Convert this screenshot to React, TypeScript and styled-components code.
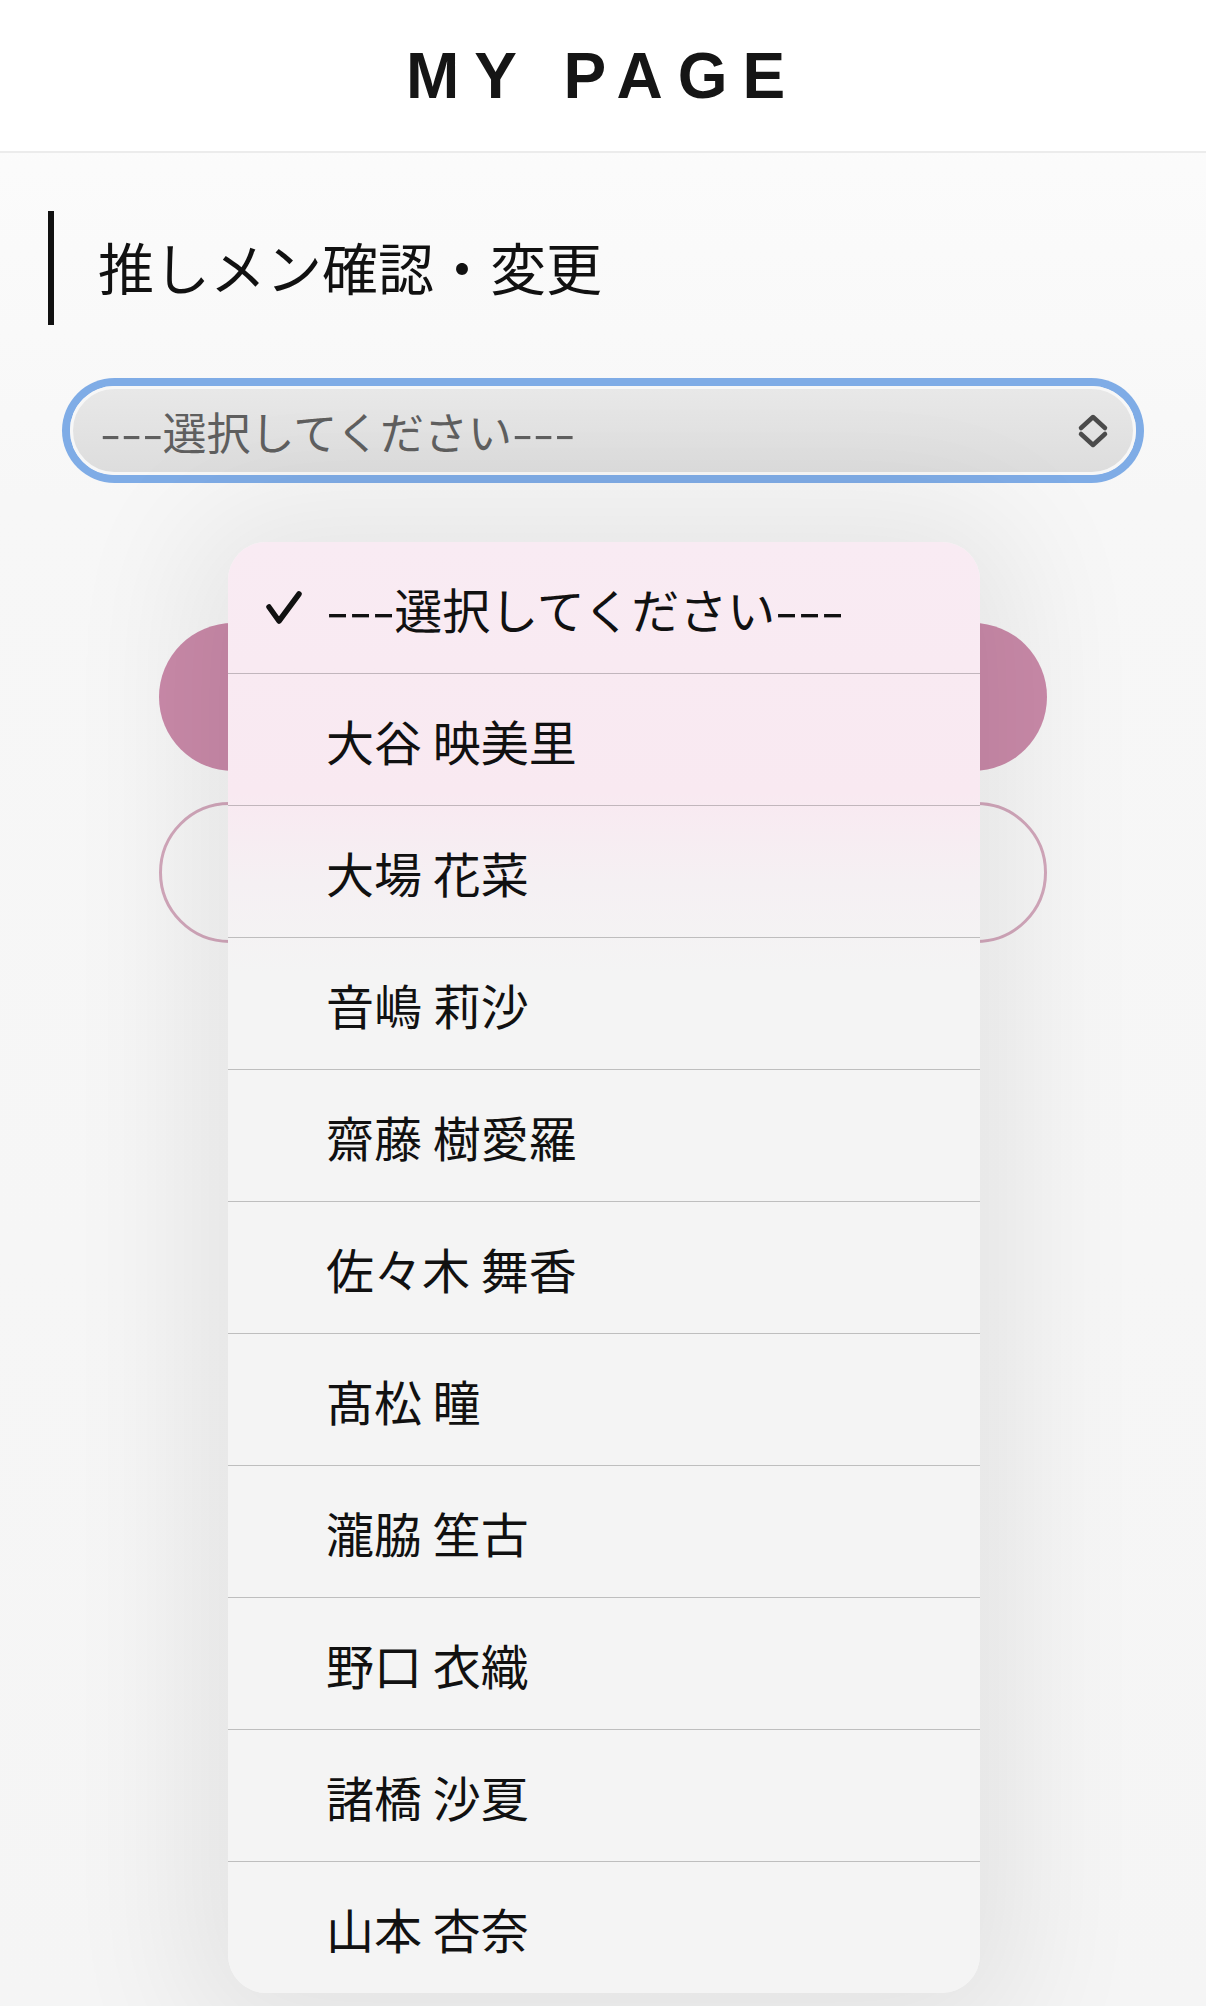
import styled, { createGlobalStyle } from "styled-components";

const members = [
  "大谷 映美里",
  "大場 花菜",
  "音嶋 莉沙",
  "齋藤 樹愛羅",
  "佐々木 舞香",
  "髙松 瞳",
  "瀧脇 笙古",
  "野口 衣織",
  "諸橋 沙夏",
  "山本 杏奈",
];

const GlobalStyle = createGlobalStyle`
  html, body {
    margin: 0;
    padding: 0;
    background: #f4f4f4;
  }
  body {
    font-family: "Noto Sans CJK JP", "Noto Sans", sans-serif;
    color: #111;
  }
`;

const Page = styled.div`
  position: relative;
  min-height: 2006px;
  background: linear-gradient(180deg, #fdfdfd 0px, #f7f7f7 500px, #f5f5f5 100%);
  overflow: hidden;
`;

const Header = styled.header`
  height: 151px;
  display: flex;
  align-items: center;
  justify-content: center;
  background: #fff;
  border-bottom: 2px solid #ececec;
`;

const Title = styled.h1`
  margin: 0;
  font-family: "Liberation Sans", Arial, sans-serif;
  font-weight: 700;
  font-size: 64px;
  letter-spacing: 15px;
  color: #151515;
`;

const Main = styled.main`
  padding: 58px 48px 0;
`;

const SectionHeading = styled.h2`
  margin: 0;
  height: 114px;
  display: flex;
  align-items: center;
  padding-left: 44px;
  padding-bottom: 6px;
  box-sizing: border-box;
  border-left: 6px solid #111;
  font-size: 56px;
  font-weight: 400;
  color: #111;
`;

const SelectBox = styled.div`
  margin: 61px 22px 0;
  height: 83px;
  display: flex;
  align-items: center;
  justify-content: space-between;
  padding: 0 24px 0 27px;
  border: 3px solid #f7f7f7;
  border-radius: 999px;
  background: linear-gradient(180deg, #e8e8e8 0%, #dddddd 100%);
  box-shadow: 0 0 0 8px #7face6;
`;

const SelectText = styled.span`
  font-size: 44px;
  color: #5f5f5f;
`;

// Hiragino's hyphens are longer than Noto's, so stretch them
const Dashes = styled.span`
  display: inline-block;
  transform: scaleX(1.38);
  transform-origin: left center;
  margin-right: 0.38em;
`;

const ButtonStack = styled.div`
  margin: 148px 111px 0;
  display: flex;
  flex-direction: column;
  gap: 31px;
`;

const PillButton = styled.button<{ $outline?: boolean }>`
  height: ${(p) => (p.$outline ? "141px" : "148px")};
  border-radius: 999px;
  border: ${(p) => (p.$outline ? "3px solid #d2a7bb" : "none")};
  background: ${(p) => (p.$outline ? "transparent" : "#ca8aa9")};
`;

const Popover = styled.div`
  position: absolute;
  top: 542px;
  left: 228px;
  width: 752px;
  border-radius: 38px;
  overflow: hidden;
  background: linear-gradient(
    180deg,
    #f9ebf3 0px,
    #f9e9f1 250px,
    #f5f0f3 340px,
    #f4f4f4 430px,
    #f4f4f4 100%
  );
  box-shadow: 0 10px 130px 40px rgba(0, 0, 0, 0.075);
`;

const Option = styled.div`
  height: 131px;
  display: flex;
  align-items: center;
  padding-left: 38px;
  font-size: 48px;
  color: #111;

  & + & {
    border-top: 1px solid rgba(0, 0, 0, 0.22);
  }
`;

const CheckSlot = styled.span`
  width: 60px;
  display: flex;
  align-items: center;
`;

const Placeholder = () => (
  <span>
    <Dashes>---</Dashes>選択してください<Dashes>---</Dashes>
  </span>
);

const Check = () => (
  <svg width="36" height="34" viewBox="0 0 36 34">
    <polyline
      points="3,16 13,30 33,3"
      fill="none"
      stroke="#111"
      strokeWidth="5.5"
      strokeLinecap="round"
      strokeLinejoin="round"
    />
  </svg>
);

const Chevrons = () => (
  <svg width="32" height="36" viewBox="0 0 32 36">
    <g fill="none" stroke="#4b4b4b" strokeWidth="4.5" strokeLinecap="round" strokeLinejoin="round">
      <polyline points="4,15 16,4 28,15" />
      <polyline points="4,21 16,32 28,21" />
    </g>
  </svg>
);

export default function App() {
  return (
    <Page>
      <GlobalStyle />
      <Header>
        <Title>MY PAGE</Title>
      </Header>
      <Main>
        <SectionHeading>推しメン確認・変更</SectionHeading>
        <SelectBox>
          <SelectText>
            <Placeholder />
          </SelectText>
          <Chevrons />
        </SelectBox>
        <ButtonStack>
          <PillButton aria-label="submit" />
          <PillButton $outline aria-label="cancel" />
        </ButtonStack>
      </Main>

      <Popover>
        <Option>
          <CheckSlot>
            <Check />
          </CheckSlot>
          <Placeholder />
        </Option>
        {members.map((name) => (
          <Option key={name}>
            <CheckSlot />
            {name}
          </Option>
        ))}
      </Popover>
    </Page>
  );
}
